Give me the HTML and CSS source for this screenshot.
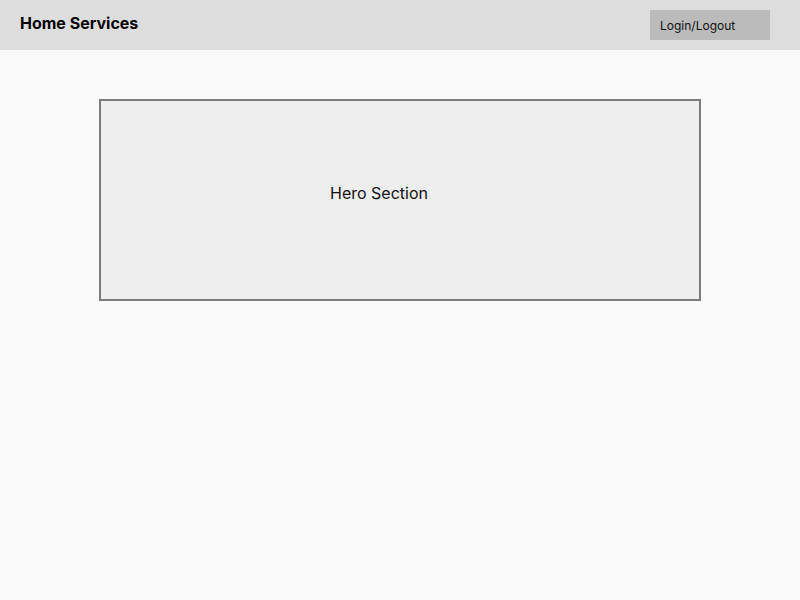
FILE: index.html
```html
<!DOCTYPE html>
<html>
<head>
<meta charset="utf-8">
<link rel="stylesheet" href="styles.css">
</head>
<body>
<header class="topbar">
  <div class="brand">Home Services</div>
  <button class="auth">Login/Logout</button>
</header>
<main class="content">
  <section class="hero"><span class="hero-text">Hero Section</span></section>
</main>
</body>
</html>
```
FILE: styles.css
```css
* { box-sizing: border-box; }
html, body { margin: 0; padding: 0; }
body {
  background: #fafafa;
  font-family: Inter, "Liberation Sans", sans-serif;
  color: #111;
  width: 800px;
  height: 600px;
}
.topbar {
  height: 50px;
  background: #dddddd;
  display: flex;
  align-items: center;
  justify-content: space-between;
  padding: 0 30px 0 20px;
}
.brand {
  font-size: 16px;
  font-weight: 700;
  color: #000;
  margin-top: -4px;
}
.auth {
  width: 120px;
  height: 30px;
  background: #bbbbbb;
  border: none;
  text-align: left;
  padding: 1px 10px 0;
  font-family: Inter, "Liberation Sans", sans-serif;
  font-size: 12px;
  color: #111;
  line-height: 29px;
}
.content {
  padding: 49px 99px;
}
.hero {
  height: 202px;
  background: #eeeeee;
  border: 2px solid #7c7c7c;
  padding: 82px 0 0 229px;
}
.hero-text {
  font-size: 16px;
  line-height: 19px;
  color: #111;
}
```
